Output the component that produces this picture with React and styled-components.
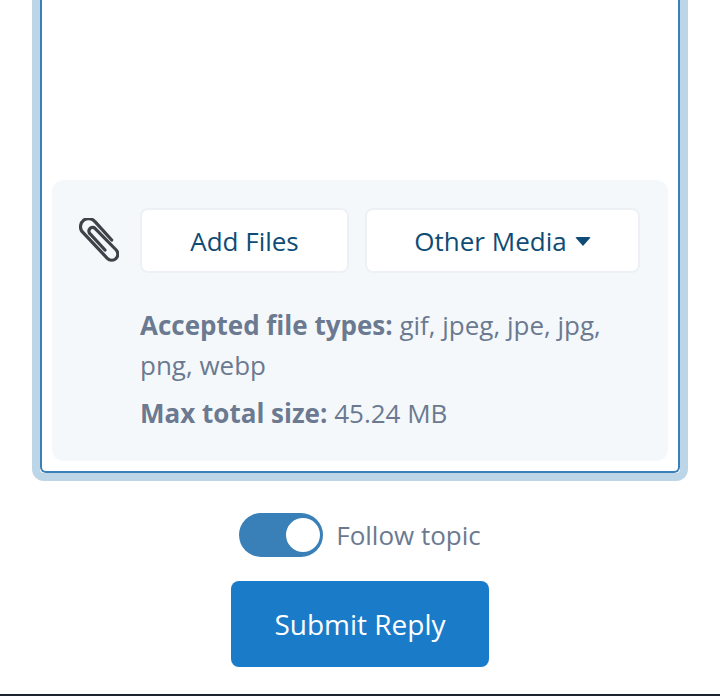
import React from "react";
import styled, { createGlobalStyle } from "styled-components";

const GlobalStyle = createGlobalStyle`
  html, body {
    margin: 0;
    padding: 0;
    background: #fff;
    overflow: hidden;
  }
`;

const Page = styled.div`
  width: 720px;
  height: 696px;
  box-sizing: border-box;
  padding: 0 32px;
  border-bottom: 2px solid #1c2430;
  font-family: "Open Sans", sans-serif;
  font-size: 26px;
  color: #6b7a90;
`;

// light blue focus ring round the editor
const EditorRing = styled.div`
  border: 8px solid #bcd6e8;
  border-top: none;
  border-radius: 0 0 12px 12px;
`;

const Editor = styled.div`
  height: 473px;
  box-sizing: border-box;
  display: flex;
  flex-direction: column;
  justify-content: flex-end;
  padding: 0 10px 10px;
  background: #fff;
  border: 2px solid #3a80b8;
  border-top: none;
  border-radius: 0 0 6px 6px;
`;

const AttachPanel = styled.div`
  height: 281px;
  box-sizing: border-box;
  padding: 28px 28px 0 88px;
  background: #f5f8fb;
  border-radius: 12px;
`;

const ButtonRow = styled.div`
  position: relative;
  display: flex;
  gap: 16px;
`;

const ClipIcon = styled.svg`
  position: absolute;
  left: -61px;
  top: 10px;
`;

const FileButton = styled.button`
  width: ${p => p.$width}px;
  height: 65px;
  box-sizing: border-box;
  display: flex;
  align-items: center;
  justify-content: center;
  gap: 8px;
  padding: 0;
  background: #fff;
  border: 2px solid #edf1f5;
  border-radius: 8px;
  font-family: inherit;
  font-size: 26px;
  color: #0f4c75;
`;

const Caret = styled.span`
  width: 0;
  height: 0;
  margin-top: 2px;
  border-left: 8px solid transparent;
  border-right: 8px solid transparent;
  border-top: 9px solid #0f4c75;
  border-radius: 2px;
`;

const Hints = styled.div`
  margin-top: 32px;
  line-height: 40px;
`;

const Hint = styled.div`
  margin-bottom: 8px;
`;

const Label = styled.strong`
  font-weight: 700;
`;

const FollowRow = styled.label`
  display: flex;
  align-items: center;
  justify-content: center;
  gap: 13px;
  margin-top: 32px;
`;

const Toggle = styled.span`
  width: 84px;
  height: 44px;
  box-sizing: border-box;
  display: flex;
  align-items: center;
  justify-content: flex-end;
  padding-right: 3px;
  background: #3a80b8;
  border-radius: 22px;
`;

const Knob = styled.span`
  width: 34px;
  height: 34px;
  background: #fff;
  border-radius: 50%;
`;

const SubmitWrap = styled.div`
  display: flex;
  justify-content: center;
  margin-top: 24px;
`;

const SubmitButton = styled.button`
  width: 258px;
  height: 86px;
  padding: 0;
  background: #1a7bc9;
  border: none;
  border-radius: 8px;
  font-family: inherit;
  font-size: 28px;
  color: #fff;
`;

export default function App() {
  return (
    <Page>
      <GlobalStyle />
      <EditorRing>
        <Editor>
          <AttachPanel>
            <ButtonRow>
              <ClipIcon width="40" height="44" viewBox="0 0 40 44" fill="none">
                <path
                  d="M32.7 22 L16 3.7 A8 8 0 0 0 3.2 13.7 L28.3 40.3 A6 6 0 0 0 37.2 32 L16 10.3 A3.2 3.2 0 0 0 11.2 16 L26 32"
                  stroke="#3d4348"
                  strokeWidth="3.2"
                  strokeLinecap="round"
                />
              </ClipIcon>
              <FileButton $width={209}>Add Files</FileButton>
              <FileButton $width={275}>
                Other Media
                <Caret />
              </FileButton>
            </ButtonRow>
            <Hints>
              <Hint>
                <Label>Accepted file types:</Label> gif, jpeg, jpe, jpg, png, webp
              </Hint>
              <Hint>
                <Label>Max total size:</Label> 45.24 MB
              </Hint>
            </Hints>
          </AttachPanel>
        </Editor>
      </EditorRing>
      <FollowRow>
        <Toggle>
          <Knob />
        </Toggle>
        Follow topic
      </FollowRow>
      <SubmitWrap>
        <SubmitButton>Submit Reply</SubmitButton>
      </SubmitWrap>
    </Page>
  );
}
